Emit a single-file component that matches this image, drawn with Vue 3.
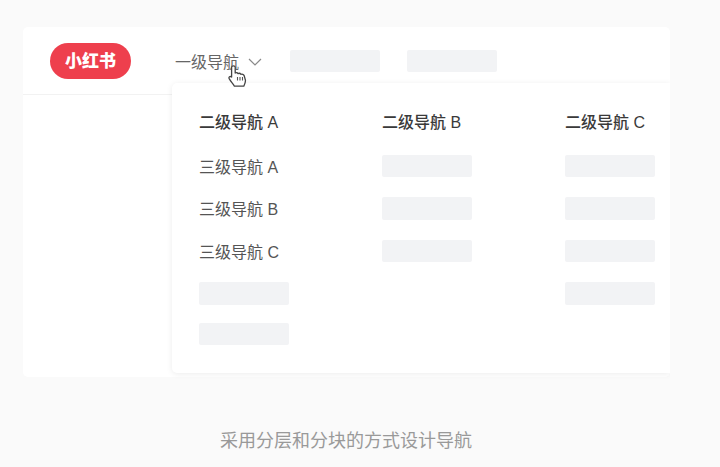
<script setup>
const columns = [
  { title: '二级导航 A', items: ['三级导航 A', '三级导航 B', '三级导航 C', null, null] },
  { title: '二级导航 B', items: [null, null, null] },
  { title: '二级导航 C', items: [null, null, null, null] },
]
</script>

<template>
  <div class="page">
    <div class="card">
      <header class="nav">
        <div class="logo">小红书</div>
        <div class="nav-main">
          <span>一级导航</span>
          <svg class="chevron" width="14" height="8" viewBox="0 0 14 8">
            <path d="M1 1l6 6 6-6" fill="none" stroke="#8a8a8a" stroke-width="1.2" />
          </svg>
          <svg class="hand" width="20" height="23" viewBox="0 0 20 23">
            <path d="M3.6 2.2c0-1.8 3.6-1.8 3.6 0V8c1-.5 2.3-.3 2.8.6 1-.5 2.3-.2 2.8.7 1.2-.5 3 0 3.4 1.4l1.2 4.5c.3 2-.6 4-1.6 6H6.4C5.3 19 3 17 1.2 13.6c-.8-1.6.8-2.8 2.4-1.6z" fill="#fff" stroke="#444" stroke-width="1.3" stroke-linejoin="round" />
            <path d="M9.5 12v3.5M12 12v3.5M14.5 12v3.5" stroke="#555" stroke-width="1.1" />
          </svg>
        </div>
        <div class="block nav-block"></div>
        <div class="block nav-block"></div>
      </header>
      <div class="dropdown">
        <div v-for="col in columns" :key="col.title" class="col">
          <div class="col-title">{{ col.title }}</div>
          <div class="col-items">
            <template v-for="(item, i) in col.items" :key="i">
              <div v-if="item" class="item">{{ item }}</div>
              <div v-else class="block"></div>
            </template>
          </div>
        </div>
      </div>
    </div>
    <p class="caption">采用分层和分块的方式设计导航</p>
  </div>
</template>

<style>
html, body {
  background: #fafafa;
}
</style>

<style scoped>
.page {
  width: 720px;
  height: 467px;
  box-sizing: border-box;
  padding: 27px 50px 0 23px;
  background: #fafafa;
  overflow: hidden;
  font-family: "Liberation Sans", "Noto Sans CJK SC", sans-serif;
}

.card {
  position: relative;
  height: 350px;
  background: #fff;
  border-radius: 5px;
}

.nav {
  height: 68px;
  box-sizing: border-box;
  display: flex;
  align-items: center;
  padding: 0 0 0 27px;
  border-bottom: 1px solid #f2f2f2;
}

.logo {
  width: 81px;
  height: 36px;
  margin-right: 44px;
  border-radius: 18px;
  background: #ee3f4d;
  color: #fff;
  font-size: 17px;
  font-weight: 900;
  line-height: 37px;
  text-align: center;
}

.nav-main {
  position: relative;
  display: flex;
  align-items: center;
  width: 115px;
  color: #666;
  font-size: 16px;
}

.chevron {
  margin-left: 9px;
  margin-top: 2px;
}

.hand {
  position: absolute;
  left: 53px;
  top: 16px;
  z-index: 2;
}

.block {
  width: 90px;
  height: 22.5px;
  background: #f2f3f5;
  border-radius: 2px;
}

.block:nth-child(5) {
  margin-top: -2px;
}

.nav-block {
  margin: 1px 27px 0 0;
}

.dropdown {
  position: absolute;
  left: 149px;
  right: 0;
  top: 56px;
  height: 290px;
  display: flex;
  padding: 27px 0 0 27px;
  box-sizing: border-box;
  background: #fff;
  border-radius: 5px 0 0 5px;
  box-shadow: 0 1px 6px rgba(0, 0, 0, 0.08);
  clip-path: inset(-10px 0 -10px -10px);
}

.col {
  width: 183px;
  flex: none;
}

.col:last-child {
  width: 105px;
}

.col-title {
  height: 24px;
  line-height: 26px;
  color: #3a3a3a;
  font-size: 16px;
  font-weight: 500;
  white-space: nowrap;
}

.col-items {
  display: flex;
  flex-direction: column;
  gap: 20px;
  padding-top: 20.5px;
}

.item {
  height: 22.5px;
  line-height: 26px;
  color: #555;
  font-size: 16px;
  white-space: nowrap;
}

.caption {
  margin: 53px 0 0 197px;
  color: #999;
  font-size: 18px;
  line-height: 22px;
  white-space: nowrap;
}
</style>
